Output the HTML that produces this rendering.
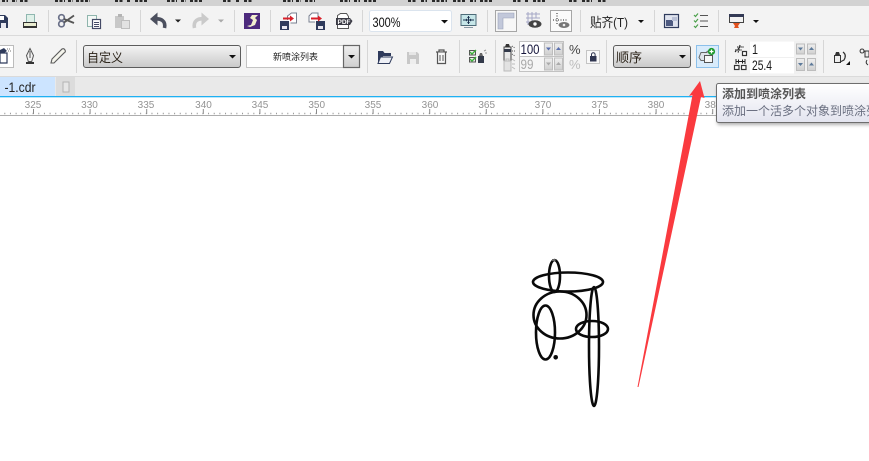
<!DOCTYPE html>
<html><head><meta charset="utf-8"><style>
html,body{margin:0;padding:0;background:#fff;width:869px;height:461px;overflow:hidden}
svg{display:block;position:absolute;left:0;top:0}
text{font-family:"Liberation Sans","Noto Sans CJK SC",sans-serif}
</style></head><body>
<svg width="869" height="461" viewBox="0 0 869 461" xmlns="http://www.w3.org/2000/svg">
<defs>
<linearGradient id="cb" x1="0" y1="0" x2="0" y2="1"><stop offset="0" stop-color="#f4f4f4"/><stop offset="1" stop-color="#c9c9c9"/></linearGradient>
<linearGradient id="tip" x1="0" y1="0" x2="0" y2="1"><stop offset="0" stop-color="#fff"/><stop offset="1" stop-color="#e3e4ef"/></linearGradient>
<linearGradient id="spin" x1="0" y1="0" x2="0" y2="1"><stop offset="0" stop-color="#efefef"/><stop offset="1" stop-color="#cfcfcf"/></linearGradient>
<filter id="sh" x="-5%" y="-10%" width="110%" height="130%"><feDropShadow dx="1" dy="2" stdDeviation="1.5" flood-color="#000" flood-opacity=".3"/></filter>
</defs>

<!-- backgrounds -->
<rect width="869" height="461" fill="#fff"/>
<rect width="869" height="6" fill="#d2d2d2"/>
<rect y="6" width="869" height="29" fill="#f3f3f3"/>
<rect y="35" width="869" height="1" fill="#dadada"/>
<rect y="36" width="869" height="40" fill="#f3f3f3"/>
<rect y="76" width="869" height="1" fill="#dadada"/>
<rect y="77" width="869" height="19" fill="#e9e9e9"/>
<rect y="96" width="869" height="1.3" fill="#1fb0f2"/>

<!-- clipped menu bottoms -->
<path d="M2 1h6M12 1h5M20 1h8M55 1h10M68 1h5M76 1h14M115 1h8M127 1h4M135 1h12M167 1h10M181 1h5M190 1h13M223 1h9M236 1h4M244 1h9M283 1h10M296 1h5M305 1h10M340 1h10M354 1h6M364 1h13M408 1h9M421 1h6M432 1h15M453 1h12M470 1h6M480 1h13M513 1h8M525 1h4M533 1h12M569 1h8M582 1h10M598 1h9" stroke="#2a2a2a" stroke-width="2" fill="none" stroke-dasharray="3 1.5"/>

<!-- separators -->
<g fill="#d6d6d6"><rect x="48" y="10" width="1" height="22"/><rect x="140" y="10" width="1" height="22"/><rect x="234" y="10" width="1" height="22"/><rect x="270" y="10" width="1" height="22"/><rect x="362" y="10" width="1" height="22"/><rect x="487" y="10" width="1" height="22"/><rect x="580" y="10" width="1" height="22"/><rect x="654" y="10" width="1" height="22"/><rect x="718" y="10" width="1" height="22"/>
<rect x="76" y="40" width="1" height="33"/><rect x="367" y="40" width="1" height="33"/><rect x="459" y="40" width="1" height="33"/><rect x="495" y="40" width="1" height="33"/><rect x="606" y="40" width="1" height="33"/><rect x="725" y="40" width="1" height="33"/><rect x="823" y="40" width="1" height="33"/></g>

<!-- save -->
<path d="M0 15h5l3 3v10H0z" fill="#2f3b5c"/><rect x="0" y="16" width="4" height="4" fill="#fff"/><rect x="1" y="23" width="5" height="5" fill="#e8e8f0"/>
<!-- printer -->
<rect x="26.5" y="14.5" width="8" height="8" fill="#dff0e8" stroke="#8fb7b0"/><rect x="23.5" y="22.5" width="13" height="5" fill="#e9ecd0" stroke="#333"/><rect x="24" y="26" width="12" height="2" fill="#333"/>
<!-- scissors -->
<g fill="none" stroke="#6a7088" stroke-width="1.7"><circle cx="61.5" cy="17.5" r="2.8"/><circle cx="61.5" cy="24" r="2.8"/></g><path d="M64 19l10 4M64 22.5l10-7" stroke="#555" stroke-width="1.8" fill="none"/>
<!-- copy -->
<rect x="87.5" y="15.5" width="9" height="11" fill="#f4f8f6" stroke="#8fb5ad"/><rect x="92.5" y="19.5" width="8" height="9" fill="#fff" stroke="#444a66" stroke-width="1.2"/><path d="M94 22.5h5M94 24.5h5M94 26.5h5" stroke="#444a66"/>
<!-- paste disabled -->
<path d="M115 16h9v12h-9z" fill="#c8c8c8"/><rect x="118" y="14" width="4" height="3" fill="#b4b4b4"/><rect x="121.5" y="20.5" width="8" height="8" fill="#e2e2e2" stroke="#bebebe"/>
<!-- undo -->
<path d="M164.5 28c1.500-7-3.500-10-10-9" fill="none" stroke="#4b4f5e" stroke-width="3.6"/><path d="M150 19l7.500-6.500v13z" fill="#4b4f5e"/>
<path d="M175 19.5h6l-3 3z" fill="#222"/>
<!-- redo -->
<path d="M194.500 28c-1.500-7 3.500-10 9-9" fill="none" stroke="#cacaca" stroke-width="3.6"/><path d="M209 19l-7.500-6.500v13z" fill="#cacaca"/>
<path d="M218 19.5h6l-3 3z" fill="#aaa"/>
<!-- purple -->
<rect x="244" y="13" width="16" height="16" fill="#4d2a7d"/><path d="M247 26l4-1 2-5-3-2 2-3h6l-3 3 2 2-2 5-5 2z" fill="#f3efcf"/>
<!-- import -->
<path d="M287.5 20v-4l4-3h5v10h-6" fill="#fff" stroke="#7a8090"/><rect x="280" y="21" width="9" height="9" fill="#2f3b5c"/><rect x="282" y="26" width="5" height="3" fill="#e8e8f0"/><path d="M283 18.500h8" stroke="#d8202a" stroke-width="2"/><path d="M290 15.500l4 3-4 3z" fill="#d8202a"/>
<!-- export -->
<path d="M315 22h-6v-6l3-3h6v5" fill="#fff" stroke="#7a8090"/><rect x="316" y="21" width="9" height="9" fill="#2f3b5c"/><rect x="318" y="26" width="5" height="3" fill="#e8e8f0"/><path d="M311 18.500h8" stroke="#d8202a" stroke-width="2"/><path d="M318 15.500l4 3-4 3z" fill="#d8202a"/>
<!-- pdf -->
<path d="M337.500 15.500l3-2h6l2 3v12h-11z" fill="#fff" stroke="#555"/><path d="M336 18h14l2.500 3-2.500 4h-14z" fill="#3a3a44"/><text x="337.500" y="24" font-size="6.500" font-weight="bold" fill="#fff">PDF</text>
<!-- zoom combo -->
<rect x="369.500" y="10.500" width="82" height="21" rx="2" fill="#fff" stroke="#dbe4ee"/><text x="372.500" y="27" font-size="13.500" fill="#111" textLength="28" lengthAdjust="spacingAndGlyphs">300%</text><path d="M441 20h7l-3.500 3.500z" fill="#111"/>
<!-- fullscreen -->
<rect x="461" y="14.500" width="15" height="11" fill="#c6e6e8" stroke="#4d6b78"/><path d="M468.500 16v8M463 20h11" stroke="#1e3350"/><path d="M465 20l2-1.500v3zM472 20l-2-1.500v3zM468.500 16l-1.500 2h3zM468.500 24l-1.500-2h3z" fill="#1e3350"/><path d="M464 27.500h9" stroke="#8a9aa5"/>
<!-- toggles -->
<rect x="495.500" y="10.500" width="21" height="21" fill="#f7f7f7" stroke="#a6a6a6"/>
<path d="M498 13h16v5h-11v11h-5z" fill="#c2c8da" stroke="#9aa2b8" stroke-width=".6"/>
<path d="M526 14h14M526 18h14M526 22h7M528 12v13M532 12v13M536 12v6" stroke="#a4a7c6" fill="none"/><ellipse cx="535" cy="24" rx="6.500" ry="3.800" fill="#444"/><circle cx="535" cy="24" r="1.700" fill="#fff"/>
<rect x="550.500" y="10.500" width="21" height="21" fill="#fbfbfb" stroke="#a6a6a6"/>
<path d="M553 20h14M557 13v12" stroke="#222" stroke-dasharray="1 1.500"/><ellipse cx="564" cy="25" rx="5.500" ry="3" fill="#777"/><circle cx="564" cy="25" r="1.300" fill="#eee"/>
<!-- snap -->
<text x="590" y="27" font-size="13" fill="#222" textLength="38" lengthAdjust="spacingAndGlyphs">贴齐(T)</text><path d="M638 20h6l-3 3z" fill="#111"/>
<!-- window icon -->
<rect x="664.500" y="14.500" width="14" height="13" fill="#dfe3ee" stroke="#2f3b5c" stroke-width="1.200"/><rect x="666" y="20" width="7" height="6" fill="#4d5a80"/><rect x="672" y="17" width="5" height="4" fill="#b9c0d6"/>
<!-- checklist -->
<path d="M694 15l1.500 1.500 2.500-3M694 20.500l1.500 1.500 2.500-3M694 26l1.500 1.500 2.500-3" fill="none" stroke="#4aa04a" stroke-width="1.200"/><path d="M700 15.500h8M700 21h8M700 26.500h8" stroke="#555"/>
<!-- app launcher -->
<rect x="729.500" y="14.500" width="14" height="8" fill="#f2f2f2" stroke="#444"/><rect x="729" y="14" width="15" height="3" fill="#333a55"/><path d="M733 23h7l-2 3 1 2h-5l1-2z" fill="#e2521e"/><path d="M753 20h6l-3 3z" fill="#111"/>

<!-- row 2 left -->
<rect x="-2" y="45.500" width="15.500" height="22" fill="#fff" stroke="#bcbcbc"/>
<path d="M0 53h7v10H0z" fill="#fff" stroke="#2f3b5c" stroke-width="1.200"/><path d="M0 50l4-2 3 3-3 2H0z" fill="#2f3b5c"/><path d="M7 49h3M8 51h3" stroke="#777" stroke-dasharray="1 1"/>
<!-- pen -->
<path d="M30 48.500l3.500 7-1.800 6h-3.400l-1.800-6z" fill="#f2f2f2" stroke="#555"/><path d="M30 51v7" stroke="#555"/><rect x="26" y="62" width="8" height="2" fill="#333"/>
<!-- pencil -->
<path d="M51 63l1-4 10-10q2-1 3 1t-1 3l-10 10z" fill="#f4f4ec" stroke="#5a5a5a" stroke-width="1.100"/>
<!-- combo 自定义 -->
<rect x="83.500" y="45.500" width="157" height="22" rx="2.500" fill="url(#cb)" stroke="#5c5c5c"/>
<text x="87" y="62" font-size="12.500" fill="#2a2218" textLength="36" lengthAdjust="spacingAndGlyphs">自定义</text><path d="M229 55h7l-3.500 3.500z" fill="#111"/>
<!-- spray list preview -->
<rect x="246.500" y="45.500" width="97" height="22" fill="#fff" stroke="#c4c4c4"/>
<text x="273" y="60" font-size="9" fill="#222" textLength="45" lengthAdjust="spacingAndGlyphs">新喷涂列表</text>
<rect x="343.500" y="45.500" width="16" height="22" fill="url(#spin)" stroke="#666" stroke-width="1.200"/><path d="M348 55h7l-3.500 3.500z" fill="#111"/>
<!-- folder -->
<path d="M378 63V51h5l1.500 2H391v3h-8l-3 7z" fill="#2f3b5c"/><path d="M380.500 57h12l-3 6.500H378z" fill="#eef0f6" stroke="#2f3b5c"/>
<!-- save disabled -->
<path d="M407 52h10l2 2v10h-12z" fill="#c8c8c8"/><rect x="410" y="59" width="6" height="5" fill="#eee"/><rect x="409" y="52" width="7" height="3" fill="#e6e6e6"/>
<!-- trash -->
<path d="M436 52h11M439 52v-2h5v2" fill="none" stroke="#555" stroke-width="1.200"/><path d="M437.500 52.500v11h8v-11" fill="#f7f7f7" stroke="#555" stroke-width="1.200"/><path d="M440 55v6M443 55v6" stroke="#555"/>
<!-- spray check -->
<rect x="469.500" y="50.500" width="6" height="4.500" fill="#eee" stroke="#555"/><rect x="469.500" y="57.500" width="6" height="4.500" fill="#eee" stroke="#555"/><path d="M470 52l2 2 4-4M470 59l2 2 4-4" fill="none" stroke="#3ab03a" stroke-width="1.400"/>
<path d="M478 56h6v7h-6z" fill="#333a4a"/><path d="M479 56l1-3h2l1 3z" fill="#666"/><path d="M484 51l2-1M485 53l2 0" stroke="#999"/>
<!-- opacity spinner -->
<path d="M504 47h7v14h-7z" fill="#e8e8e8" stroke="#444"/><path d="M505 47l1-3h3l1 3z" fill="#333"/><path d="M504 49h7v3h-7z" fill="#333a4a"/>
<path d="M512 46l3 2M512 51h3M512 54l3 2" stroke="#555" stroke-dasharray="1 1"/>
<path d="M504 61h7v10h-7z" fill="#e2e2e2" stroke="#bbb"/><path d="M506 61v-2h3v2M512 59l3 2M512 64h3M512 67l3 2" fill="none" stroke="#bbb"/>
<rect x="519.500" y="41.500" width="44" height="30" fill="#f6f6f6" stroke="#c2c2c2"/><rect x="520" y="42" width="23" height="15" fill="#fff"/>
<path d="M520 56.500h43" stroke="#c2c2c2"/>
<text x="520.500" y="54" font-size="13.500" fill="#16163c" textLength="19" lengthAdjust="spacingAndGlyphs">100</text>
<text x="520.500" y="69" font-size="13.500" fill="#a8a8a8" textLength="13" lengthAdjust="spacingAndGlyphs">99</text>
<g stroke="#bdbdbd" fill="url(#spin)"><rect x="544.500" y="43" width="8" height="12"/><rect x="554.500" y="43" width="8" height="12"/><rect x="544.500" y="58" width="8" height="12"/><rect x="554.500" y="58" width="8" height="12"/></g>
<path d="M546 47.500h5l-2.500 3zM556 50h5l-2.500-3z" fill="#5a6fae"/><path d="M546 62.500h5l-2.500 3zM556 65h5l-2.500-3z" fill="#aaa"/>
<text x="569" y="54" font-size="13" fill="#444">%</text><text x="569" y="69" font-size="13" fill="#bdbdbd">%</text>
<rect x="586.500" y="50.500" width="13" height="13" fill="#f8f8f8" stroke="#c4c4c4"/><rect x="590" y="56" width="6.500" height="5.500" fill="#2f3550"/><path d="M591.500 56v-1.500a1.800 1.800 0 0 1 3.600 0V56" fill="none" stroke="#2f3550"/>
<!-- order combo -->
<rect x="613.500" y="45.500" width="77" height="22" rx="2.500" fill="url(#cb)" stroke="#5c5c5c"/>
<text x="616" y="62" font-size="13" fill="#2a2218">顺序</text><path d="M679 55h7l-3.500 3.500z" fill="#111"/>
<!-- add button -->
<rect x="696.500" y="45.500" width="22" height="22" fill="#d8ebfb" stroke="#8cc0ea"/>
<path d="M701 52.500h6v-1l3-1 2 2v3h-4v5h-7l-2-3z" fill="#dfe3ea" stroke="#666"/><rect x="704.500" y="55.500" width="8" height="7" fill="#f7f7f7" stroke="#555"/><circle cx="711.500" cy="51.500" r="3.600" fill="#1d9a2e"/><path d="M709.500 51.500h4M711.500 49.500v4" stroke="#fff" stroke-width="1.200"/>
<!-- spray count icons -->
<path d="M735 52l6-6M737 47h7M735 50h7M740 45l-2 8" stroke="#222" stroke-width="1.100" fill="none" stroke-dasharray="1.500 .6"/><rect x="742.500" y="51.500" width="4" height="4" fill="#fff" stroke="#333" stroke-width="1.200"/>
<path d="M736 59v5M745 59v5M736 61.500h9M738.500 59.500v4M742.500 59.500v4" stroke="#222"/><rect x="734.500" y="65.500" width="4.500" height="4" fill="#fff" stroke="#333" stroke-width="1.200"/><rect x="741.500" y="65.500" width="4.500" height="4" fill="#fff" stroke="#333" stroke-width="1.200"/>
<!-- spinner right -->
<rect x="749.500" y="41" width="68" height="33" fill="#f0f0f0"/>
<rect x="750" y="41.500" width="44" height="15.500" fill="#fff"/><rect x="750" y="58" width="44" height="15.500" fill="#fff"/>
<text x="752" y="54" font-size="13.500" fill="#1a1a1a" textLength="6" lengthAdjust="spacingAndGlyphs">1</text><text x="752" y="70" font-size="13.500" fill="#1a1a1a" textLength="20" lengthAdjust="spacingAndGlyphs">25.4</text>
<g stroke="#bdbdbd" fill="url(#spin)"><rect x="796.500" y="44" width="8" height="10"/><rect x="807.500" y="44" width="8" height="10"/><rect x="796.500" y="58.500" width="8" height="12"/><rect x="807.500" y="58.500" width="8" height="12"/></g>
<path d="M798 47.500h5l-2.500 3zM809 50h5l-2.500-3zM798 63h5l-2.500 3zM809 65.500h5l-2.500-3z" fill="#5d7a9a"/>
<!-- right icons -->
<rect x="834.500" y="55.500" width="6" height="7" fill="#eee" stroke="#333"/><path d="M835 55l1-3h3l1 3z" fill="#333"/><path d="M843 52q4 3 1 8l-4 2" fill="none" stroke="#333" stroke-width="1.200"/><path d="M846 65l4-4v4z" fill="#111"/>
<path d="M862 53a2 2 0 1 1 .1 0M867 60q-2 3 1 5" fill="none" stroke="#333"/><rect x="865" y="51" width="4" height="6" fill="#eee" stroke="#333"/>

<!-- tabs -->
<rect y="77" width="55" height="19" fill="#cce4ff"/>
<text x="4.500" y="92" font-size="13.500" fill="#222" textLength="31" lengthAdjust="spacingAndGlyphs">-1.cdr</text>
<rect x="56" y="77" width="19" height="19" fill="#dcdcdc"/><rect x="63" y="82" width="6" height="10" fill="#e6e6e6" stroke="#b4b4b4"/>

<!-- ruler -->
<line x1="0" y1="115.500" x2="869" y2="115.500" stroke="#adadad"/>
<line x1="0" y1="113.500" x2="869" y2="113.500" stroke="#999" stroke-width="1.500" stroke-dasharray="1 4.660" stroke-dashoffset="-4.300"/>
<line x1="0" y1="111.500" x2="869" y2="111.500" stroke="#8a8a8a" stroke-width="5" stroke-dasharray="1 55.600" stroke-dashoffset="-33"/>
<g font-size="10" fill="#939393" text-anchor="middle"><text x="33" y="108">325</text><text x="89.500" y="108">330</text><text x="146" y="108">335</text><text x="203.500" y="108">340</text><text x="260" y="108">345</text><text x="316.700" y="108">350</text><text x="373" y="108">355</text><text x="430" y="108">360</text><text x="486.700" y="108">365</text><text x="543" y="108">370</text><text x="599.700" y="108">375</text><text x="656" y="108">380</text><text x="713" y="108">385</text></g>

<!-- drawing -->
<g fill="none" stroke="#0a0a0a" stroke-width="2.600">
<ellipse cx="568" cy="282" rx="35" ry="9.500"/>
<ellipse cx="554.500" cy="276" rx="5.500" ry="16"/>
<ellipse cx="560" cy="315" rx="26.500" ry="23.500"/>
<ellipse cx="545.500" cy="332.500" rx="9.500" ry="27"/>
<ellipse cx="592" cy="329" rx="16" ry="8"/>
<ellipse cx="594" cy="346.500" rx="5" ry="59.500"/>
</g>
<circle cx="555.700" cy="357.300" r="2.300" fill="#0a0a0a"/>
<rect x="552" y="259" width="3.500" height="2" fill="#666"/>

<!-- tooltip -->
<rect x="716.500" y="83.500" width="160" height="39" rx="2" fill="url(#tip)" stroke="#6e6e6e" filter="url(#sh)"/>
<text x="722" y="98" font-size="12" fill="#555" font-weight="bold">添加到喷涂列表</text>
<text x="722" y="115" font-size="12" fill="#6a6f80">添加一个活多个对象到喷涂列表</text>

<!-- red arrow -->
<polygon points="700,81 704.500,98 701,97 638.500,387 637.500,387 692.500,95 689,96" fill="#fa3a3f"/>
</svg>
</body></html>
